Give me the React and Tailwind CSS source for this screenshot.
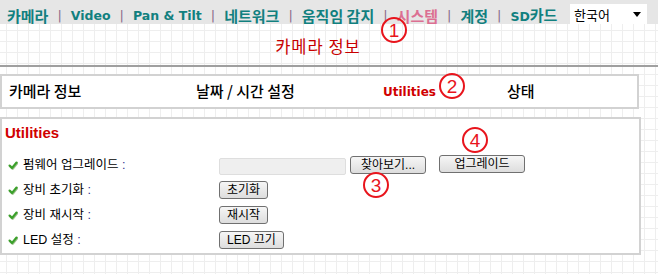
import React from 'react';

const KR = "font-['Noto_Sans_CJK_KR',sans-serif]";
const VD = "font-['DejaVu_Sans','Noto_Sans_CJK_KR',sans-serif]";
const AR = "font-['Liberation_Sans','Noto_Sans_CJK_KR',sans-serif]";

const menu = [
  { label: '카메라', latin: false },
  { label: 'Video', latin: true },
  { label: 'Pan & Tilt', latin: true },
  { label: '네트워크', latin: false },
  { label: '움직임 감지', latin: false },
  { label: '시스템', latin: false, active: true },
  { label: '계정', latin: false },
];

const Check = () => (
  <svg width="10" height="9" viewBox="0 0 10 9" className="shrink-0">
    <path d="M1.5 4.5 L4 7 L8.5 1.5" fill="none" stroke="#9bbf8a" strokeWidth="2.6" strokeLinecap="round" strokeLinejoin="round" transform="translate(0.6 0.6)" />
    <path d="M1.5 4.5 L4 7 L8.5 1.5" fill="none" stroke="#3aa02a" strokeWidth="2" strokeLinecap="round" strokeLinejoin="round" />
  </svg>
);

const Btn = ({ children, className = '' }) => (
  <button
    className={`h-[18px] px-[7px] border border-[#707070] rounded-[3px] bg-[linear-gradient(to_bottom,#f6f6f6,#dddddd)] text-[12px] leading-none text-black ${AR} ${className}`}
  >
    {children}
  </button>
);

const Mark = ({ n, className }) => (
  <div
    className={`absolute w-[26px] h-[26px] rounded-full border-2 border-[#e8141c] flex items-center justify-center text-[#e8141c] text-[19px] leading-none ${AR} ${className}`}
  >
    {n}
  </div>
);

const Row = ({ label, children }) => (
  <div className="flex items-center h-[24px]">
    <div className={`w-[217px] pl-[6px] flex items-center gap-[5px] text-[12.5px] text-black ${AR}`}>
      <Check />
      <span>
        {label} <span className="text-[#303090]">:</span>
      </span>
    </div>
    <div className="flex items-center">{children}</div>
  </div>
);

export default function App() {
  return (
    <div className="relative w-[658px] h-[274px] overflow-hidden bg-white bg-[linear-gradient(to_right,#eeeeee_1px,transparent_1px),linear-gradient(to_bottom,#eeeeee_1px,transparent_1px)] bg-[length:11px_11px] bg-[position:6px_8px]">
      {/* top menu */}
      <div className="h-[24px] bg-[#e6e6e6] flex items-end pl-[7px]">
        <div className="flex items-end gap-[9px] pb-[1px]">
          {menu.map((m) => (
            <React.Fragment key={m.label}>
              <span
                className={`font-bold leading-none ${m.latin ? `text-[12.5px] ${VD} pb-[1px]` : `text-[15px] ${KR}`} ${
                  m.active ? 'text-[#dc6f92]' : 'text-[#11807f]'
                }`}
              >
                {m.label}
              </span>
              <span className={`text-[13px] leading-none text-[#8a6a8a] ${VD} pb-[1px]`}>|</span>
            </React.Fragment>
          ))}
          <span className="font-bold leading-none text-[#11807f]">
            <span className={`text-[12.5px] ${VD}`}>SD</span>
            <span className={`text-[15px] ${KR}`}>카드</span>
          </span>
        </div>
        <div className="ml-auto mr-[11px] w-[77px] h-[20px] bg-white flex items-center pl-[4px] pr-[6px]">
          <span className={`text-[13px] leading-none text-black ${KR}`}>한국어</span>
          <svg width="8" height="5" viewBox="0 0 8 5" className="ml-auto">
            <path d="M0 0 H8 L4 5 Z" fill="#000" />
          </svg>
        </div>
      </div>

      <div className="w-[640px]">
        {/* title */}
        <div className={`h-[41px] flex items-center justify-center pt-[4px] pr-[4px] text-[16.5px] tracking-[1px] text-[#c80000] ${KR}`}>
          카메라 정보
        </div>

        <div className="w-[658px] border-t-2 border-[#a0a0a0]" />

        {/* tabs */}
        <div className={`mt-[7px] w-[639px] h-[35px] bg-white border-2 border-[#d2d2d2] flex items-center pl-[7px] text-[15px] font-medium text-black ${KR}`}>
          <div className="w-[187px]">카메라 정보</div>
          <div className="w-[187px]">날짜 / 시간 설정</div>
          <div className={`w-[124px] text-[12px] font-bold text-[#d00000] ${VD}`}>Utilities</div>
          <div>상태</div>
        </div>

        {/* utilities panel */}
        <div className="mt-[8px] w-[641px] h-[138px] bg-white border-2 border-[#d2d2d2] pt-[4px]">
          <div className={`pl-[3px] text-[15px] font-bold text-[#d00000] leading-[20px] ${AR}`}>Utilities</div>
          <div className="mt-[10px] flex flex-col gap-[1px]">
            <Row label="펌웨어 업그레이드">
              <div className="w-[127px] h-[17px] bg-[#efefef] border border-[#dedede] rounded-[2px] mt-[2px]" />
              <Btn className="ml-[4px] w-[76px] px-0">찾아보기...</Btn>
              <Btn className="ml-[13px] w-[86px] px-0 -mt-[3px]">업그레이드</Btn>
            </Row>
            <Row label="장비 초기화">
              <Btn>초기화</Btn>
            </Row>
            <Row label="장비 재시작">
              <Btn>재시작</Btn>
            </Row>
            <Row label="LED 설정">
              <Btn>LED 끄기</Btn>
            </Row>
          </div>
        </div>
      </div>

      <Mark n="1" className="left-[381px] top-[17px]" />
      <Mark n="2" className="left-[439px] top-[73px]" />
      <Mark n="3" className="left-[363px] top-[172px]" />
      <Mark n="4" className="left-[462px] top-[127px]" />
    </div>
  );
}
